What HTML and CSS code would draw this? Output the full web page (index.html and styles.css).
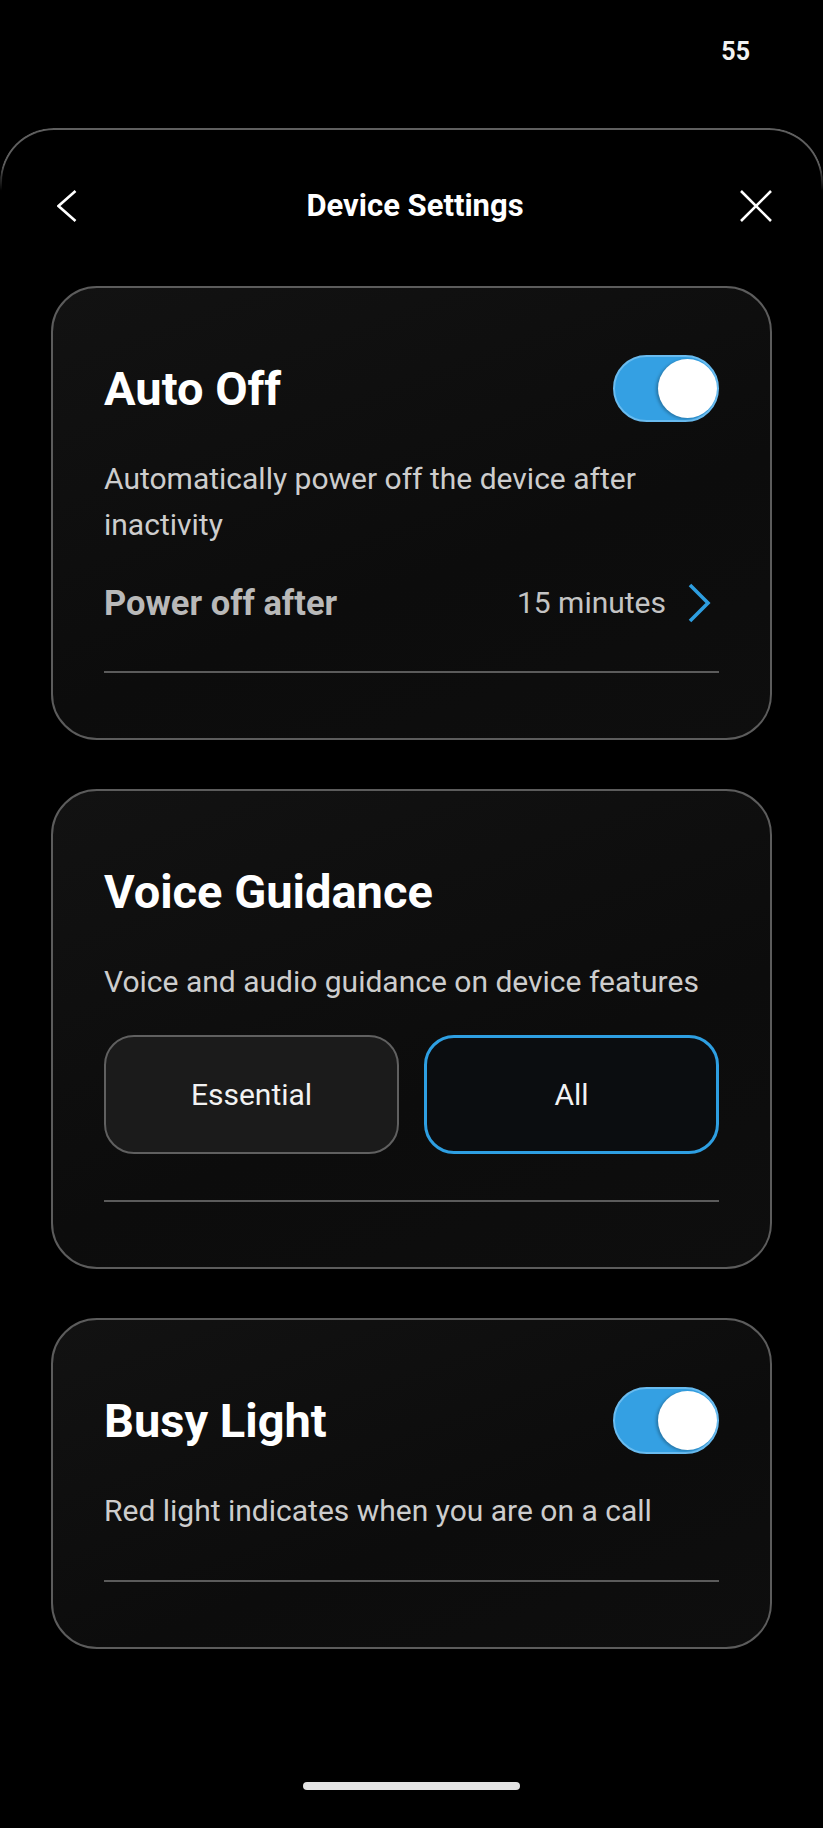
FILE: index.html
```html
<!DOCTYPE html>
<html lang="en">
<head>
<meta charset="utf-8">
<title>Device Settings</title>
<link rel="stylesheet" href="styles.css">
</head>
<body>
<div class="screen">
  <div class="status"><span class="status-num">55</span></div>
  <section class="sheet">
    <header class="header">
      <button class="icon-btn back" aria-label="Back">
        <svg width="20" height="34" viewBox="0 0 20 34"><path d="M18.5 2 L1.5 17 L18.5 32" fill="none" stroke="#fff" stroke-width="2.6" stroke-linecap="butt" stroke-linejoin="miter"/></svg>
      </button>
      <h1 class="title">Device Settings</h1>
      <button class="icon-btn close" aria-label="Close">
        <svg width="34" height="34" viewBox="0 0 34 34"><path d="M2 2 L32 32 M32 2 L2 32" fill="none" stroke="#fff" stroke-width="2.6"/></svg>
      </button>
    </header>

    <div class="cards">
      <div class="card">
        <div class="card-head">
          <h2 class="card-title">Auto Off</h2>
          <div class="toggle on"><span class="knob"></span></div>
        </div>
        <p class="desc">Automatically power off the device after inactivity</p>
        <div class="setting-row">
          <span class="setting-label">Power off after</span>
          <span class="setting-value">
            <span>15 minutes</span>
            <svg class="chev" width="32" height="40" viewBox="0 0 32 40"><path d="M3 2 L21 20 L3 38" fill="none" stroke="#2e9ee0" stroke-width="3.6"/></svg>
          </span>
        </div>
        <div class="divider"></div>
      </div>

      <div class="card">
        <div class="card-head">
          <h2 class="card-title">Voice Guidance</h2>
        </div>
        <p class="desc">Voice and audio guidance on device features</p>
        <div class="choices">
          <button class="choice">Essential</button>
          <button class="choice selected">All</button>
        </div>
        <div class="divider"></div>
      </div>

      <div class="card">
        <div class="card-head">
          <h2 class="card-title">Busy Light</h2>
          <div class="toggle on"><span class="knob"></span></div>
        </div>
        <p class="desc">Red light indicates when you are on a call</p>
        <div class="divider"></div>
      </div>
    </div>

    <div class="home-bar"><span class="home-indicator"></span></div>
  </section>
</div>
</body>
</html>
```

FILE: styles.css
```css
* { box-sizing: border-box; }

html, body {
  margin: 0;
  padding: 0;
  background: #000;
}

body {
  font-family: Roboto, "Liberation Sans", Arial, sans-serif;
  color: #fff;
  width: 823px;
  height: 1828px;
  overflow: hidden;
}

.screen {
  width: 823px;
  height: 1828px;
  display: flex;
  flex-direction: column;
}

.status {
  height: 128px;
  display: flex;
  justify-content: flex-end;
  align-items: flex-start;
  padding: 37px 73px 0 0;
}

.status-num {
  font-size: 25px;
  font-weight: 700;
  line-height: 30px;
  color: #f2f2f2;
}

.sheet {
  position: relative;
  flex: 1;
  display: flex;
  flex-direction: column;
  background: #000;
}

.sheet::before {
  content: "";
  position: absolute;
  left: 0;
  right: 0;
  top: 0;
  height: 64px;
  border: 2px solid #5f5f5f;
  border-bottom: none;
  border-radius: 54px 54px 0 0;
  -webkit-mask-image: linear-gradient(#000 55%, transparent 95%);
  mask-image: linear-gradient(#000 55%, transparent 95%);
  pointer-events: none;
}

.header {
  margin-top: 40px;
  height: 76px;
  display: grid;
  grid-template-columns: 1fr auto 1fr;
  align-items: center;
  padding: 0 50px 0 57px;
}

.icon-btn {
  background: none;
  border: none;
  padding: 0;
  margin: 0;
  display: flex;
  align-items: center;
}

.back { justify-self: start; }
.close { justify-self: end; }

.title {
  margin: 0;
  font-size: 31px;
  font-weight: 700;
  line-height: 40px;
  color: #fff;
  letter-spacing: 0;
}

.cards {
  margin-top: 42px;
  padding: 0 51px;
  display: flex;
  flex-direction: column;
  gap: 49px;
}

.card {
  border: 2px solid #5c5c5c;
  border-radius: 46px;
  background: linear-gradient(160deg, #121212 0%, #0c0c0c 60%, #0e0e0e 100%);
  padding: 67px 51px 65px;
  display: flex;
  flex-direction: column;
}

.card-head {
  height: 67px;
  display: flex;
  align-items: center;
  justify-content: space-between;
}

.card-title {
  margin: 0;
  font-size: 47px;
  font-weight: 700;
  line-height: 56px;
  color: #fff;
}

.toggle {
  width: 106px;
  height: 67px;
  border-radius: 34px;
  background: #34a0e3;
  border: 2px solid #69bbef;
  display: flex;
  align-items: center;
  justify-content: flex-end;
}

.knob {
  width: 59px;
  height: 59px;
  border-radius: 50%;
  background: #fff;
  box-shadow: -2px 1px 3px rgba(0, 0, 0, 0.25);
}

.desc {
  margin: 34px 0 0;
  font-size: 30px;
  line-height: 46px;
  color: #cdcdcd;
}

.setting-row {
  margin-top: 32px;
  height: 45px;
  display: flex;
  align-items: center;
  justify-content: space-between;
}

.setting-label {
  font-size: 34.5px;
  font-weight: 700;
  color: #b9b9b9;
}

.setting-value {
  display: flex;
  align-items: center;
  gap: 21px;
  font-size: 30px;
  color: #c4c4c4;
}

.chev { display: block; }

.divider {
  margin-top: 46px;
  height: 2px;
  background: #5b5b5b;
}

.choices {
  margin-top: 30px;
  display: grid;
  grid-template-columns: 1fr 1fr;
  gap: 25px;
}

.choice {
  height: 119px;
  border-radius: 30px;
  border: 2px solid #606060;
  background: #1b1b1b;
  color: #f2f2f2;
  font-family: Roboto, "Liberation Sans", Arial, sans-serif;
  font-size: 30px;
  padding: 0;
}

.choice.selected {
  border: 3px solid #2e9fe2;
  background: #0b0d10;
}

.home-bar {
  margin-top: auto;
  height: 46px;
  display: flex;
  justify-content: center;
  align-items: flex-start;
}

.home-indicator {
  width: 217px;
  height: 8px;
  border-radius: 4px;
  background: #e4e4e4;
}
```
